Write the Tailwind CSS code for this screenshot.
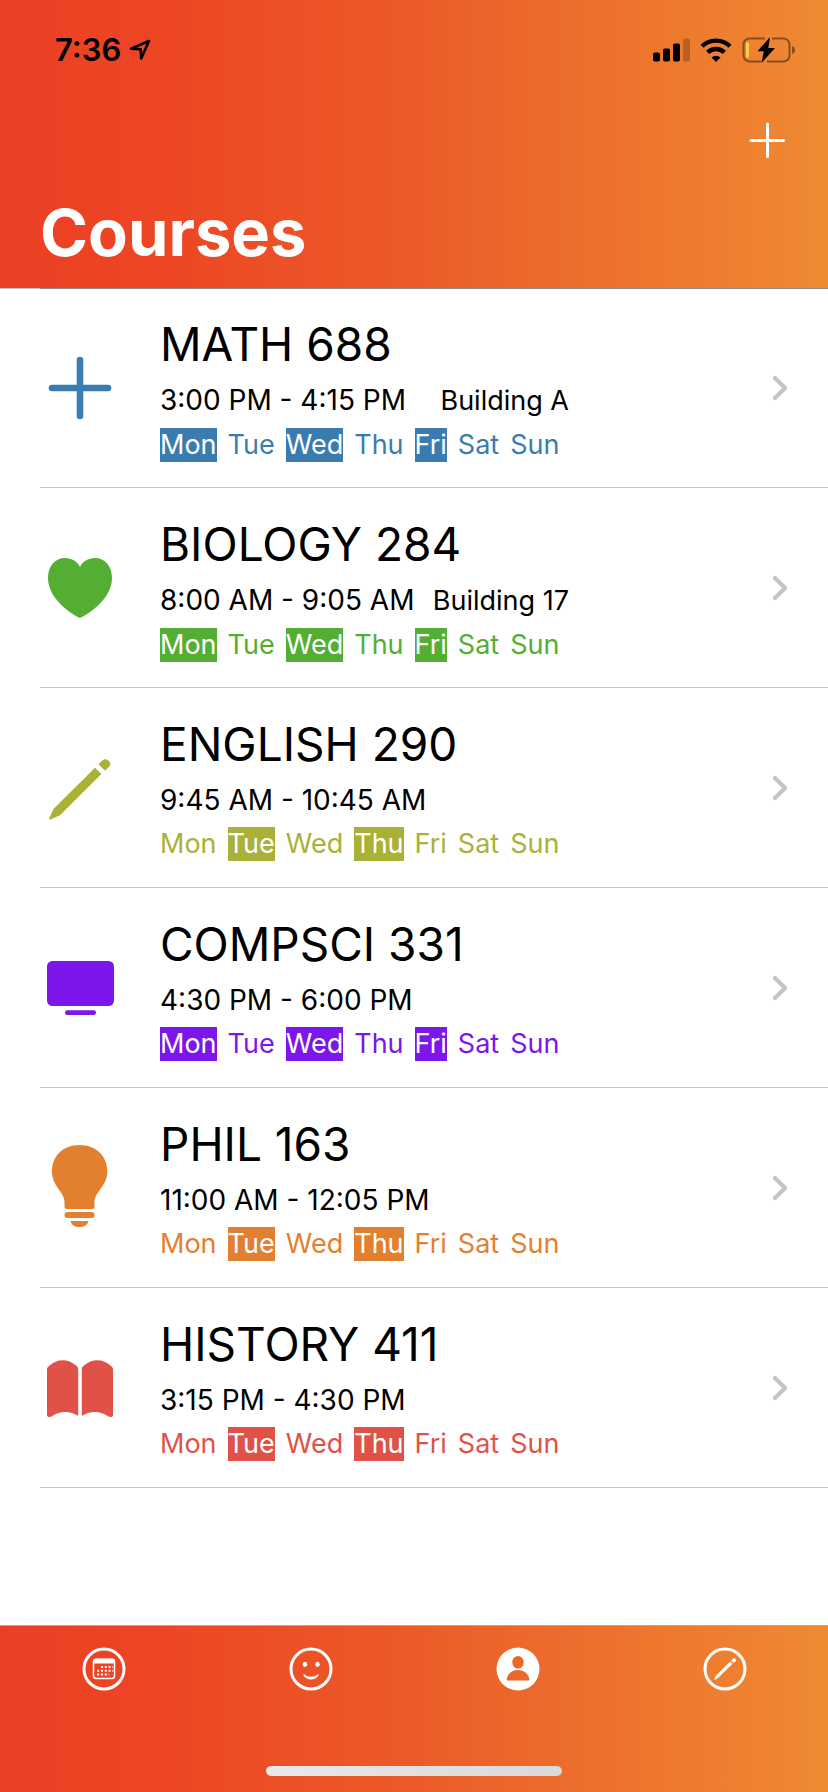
<!DOCTYPE html>
<html lang="en">
<head>
<meta charset="utf-8">
<meta name="viewport" content="width=device-width, initial-scale=1">
<title>Courses</title>
<script src="https://cdn.jsdelivr.net/npm/@tailwindcss/browser@4"></script>
</head>
<body class="flex min-h-screen flex-col bg-white font-['Inter',sans-serif] text-black">

<header class="bg-linear-[90deg,#ea3f25_0%,#ed4624_20%,#eb5b29_50%,#ed732d_75%,#ef8a33_100%]">
  <div class="flex h-[100px] items-center justify-between pr-[33px] pl-[55px]">
    <div class="flex items-center gap-2">
      <span class="text-[31px] leading-10 font-semibold">7:36</span>
      <svg class="h-[22px] w-[22px]" viewBox="0 0 22 22" fill="none" stroke="#000" stroke-width="2.6" stroke-linejoin="round" aria-hidden="true"><path d="M20 2 2 9.6l9.6.6.6 9.300z"/></svg>
    </div>
    <div class="flex items-center gap-[10px]">
      <svg class="h-6 w-[37px]" viewBox="0 0 37 24" aria-hidden="true"><rect x="0" y="14.500" width="7" height="9" rx="1.800"/><rect x="10" y="10.500" width="7" height="13" rx="1.800"/><rect x="20" y="5.500" width="7" height="18" rx="1.800"/><rect x="30" y=".5" width="7" height="23" rx="1.800" opacity=".22"/></svg>
      <svg class="h-6 w-8" viewBox="0 0 32 24" fill="none" stroke="#000" stroke-width="4.400" aria-hidden="true"><path d="M2 8.300a20 20 0 0 1 28 0"/><path d="M7.600 14.400a12 12 0 0 1 16.800 0"/><path d="M16 24l-4.500-4.500a6.500 6.500 0 0 1 9 0z" fill="#000" stroke="none"/></svg>
      <svg class="h-[26px] w-[53px]" viewBox="0 0 53 26" aria-hidden="true"><g fill="none" stroke="#000" stroke-opacity=".42" stroke-width="2"><path d="M23 1.500H7.500a6 6 0 0 0-6 6v11a6 6 0 0 0 6 6H19"/><path d="M30 1.500h11.500a6 6 0 0 1 6 6v11a6 6 0 0 1-6 6H25"/></g><path d="M50 9c4 1.200 4 6.800 0 8z" opacity=".42"/><path d="M4 5.500h3v15H4z" fill="#f8ce46"/><path d="M28 0 15.500 14.300h6.300L19.500 26 33 11h-6.700z"/></svg>
    </div>
  </div>
  <div class="flex h-20 items-center justify-end pr-[43px]">
    <button type="button" aria-label="Add course"><svg class="h-9 w-9" viewBox="0 0 36 36" stroke="#fff" stroke-width="3" stroke-linecap="round"><path d="M18.500 2v32.500M2 18.500h32.500"/></svg></button>
  </div>
  <h1 class="h-[108px] pt-[13px] pl-10 text-[65px] leading-[80px] font-bold text-white">Courses</h1>
  <div class="-mb-px flex h-px"><div class="w-10 bg-[#c4c4c4]"></div><div class="flex-1 bg-[#8e8e8e]"></div></div>
</header>

<main class="flex-1">
  <ul id="courses"></ul>
</main>

<footer class="border-t border-[#b3aaa6] bg-linear-[90deg,#ea3f25_0%,#ed4624_20%,#eb5b29_50%,#ed732d_75%,#ef8a33_100%] pt-[21px] pb-4">
  <nav class="grid grid-cols-4" aria-label="Sections">
    <a href="#calendar" aria-label="Calendar" class="flex justify-center"><svg class="h-11 w-11" viewBox="0 0 44 44" fill="none" stroke="#fff"><circle cx="22" cy="22" r="20" stroke-width="3"/><rect x="11.500" y="12.500" width="21" height="19" rx="2.500" stroke-width="1.500"/><path d="M11 16v-2a2.500 2.500 0 0 1 2.500-2.500h17A2.500 2.500 0 0 1 33 14v2.500H11z" fill="#fff" stroke="none"/><path d="M19 20h12M15.200 23.800h16M15.200 27.600h12" stroke-width="2" stroke-dasharray="2 1.800"/></svg></a>
    <a href="#mood" aria-label="Mood" class="flex justify-center"><svg class="h-11 w-11" viewBox="0 0 44 44" fill="#fff"><circle cx="22" cy="22" r="20" fill="none" stroke="#fff" stroke-width="3"/><ellipse cx="16" cy="17.300" rx="2.200" ry="2.600"/><ellipse cx="28.500" cy="17.300" rx="2.200" ry="2.600"/><path d="M15.500 27.500c3.500 3 9.500 3 13 0 .9-.4 1.300.2 1 1-3.400 5.300-11.600 5.300-15 0-.3-.8.2-1.400 1-1z"/></svg></a>
    <a href="#courses" aria-label="Courses" aria-current="page" class="flex justify-center"><svg class="h-11 w-11" viewBox="0 0 44 44" fill="#fff" fill-rule="evenodd"><path d="M22 .5a21.500 21.500 0 1 0 0 43 21.500 21.500 0 1 0 0-43zM22 9a5.700 6.300 0 1 1 0 12.600A5.700 6.300 0 1 1 22 9zM12 33.500c-1 0-1.400-.5-1.200-1.500 1-5.500 5-9 11.200-9s10.200 3.500 11.400 9c.2 1-.2 1.500-1.200 1.500z"/></svg></a>
    <a href="#notes" aria-label="Notes" class="flex justify-center"><svg class="h-11 w-11" viewBox="0 0 44 44" fill="#fff"><circle cx="22" cy="22" r="20" fill="none" stroke="#fff" stroke-width="3"/><path d="m27 14.700 2.400 2.400L14.800 31.300l-2.700 1.500c-.5.100-.8-.2-.7-.7l1.200-3z"/><circle cx="31" cy="13.200" r="1.900"/><circle cx="28.500" cy="14" r=".6"/><circle cx="30.200" cy="15.700" r=".6"/></svg></a>
  </nav>
  <div class="mx-auto mt-[75px] h-[10px] w-[296px] rounded-full bg-linear-to-r from-[#e9e9e9] to-[#d9d9d9]"></div>
</footer>

<script>
const icons = {
  plus: '<path d="M40 22v56M12 50h56" stroke="currentColor" stroke-width="6.600" stroke-linecap="round"/>',
  heart: '<path d="M40 80C36 78.500 8 63 8 40 8 28 15 20 25 20c7 0 12.500 3.500 15 9 2.500-5.500 8-9 15-9 10 0 17 8 17 20 0 23-28 38.500-32 40z"/>',
  pencil: '<path d="m55 29.700 6.300 6.300L20 77.300l-9.500 4.200c-1 .3-1.600-.3-1.300-1.300L13.500 71zM58.500 26.300l3.200-3.200c2.300-2.300 4.700-2.300 6.600-.5 2.600 2.400 2.600 4.400.3 6.700l-3.500 3.500z"/>',
  display: '<rect x="7" y="23" width="67" height="45" rx="5.500"/><rect x="25" y="72.300" width="31" height="4.700" rx="2.300"/>',
  bulb: '<path d="M39.500 7C23 7 12 18 12 33.500 12 48 24.500 54 24.500 64v4.500c0 1.700.8 2.500 2.500 2.500h25c1.700 0 2.500-.8 2.500-2.500V64c0-10 12.800-16 12.800-30.500C67.300 18 56 7 39.500 7z"/><rect x="24.500" y="74" width="30" height="6" rx="3"/><path d="M30.500 83h18c-1 4-4.500 6-9 6s-8-2-9-6z"/>',
  book: '<path d="M7 32c0-2 .3-2.700 2-4 8-7.500 19-7.500 27-.5 1.700 1.300 2.200 2 2.200 4V78c-8-5.500-18-5.500-26 0-2 1.800-5.200 1.300-5.200-1zM73 32c0-2-.3-2.700-2-4-8-7.500-19-7.500-27-.5-1.700 1.300-2.200 2-2.200 4V78c8-5.500 18-5.500 26 0 2 1.800 5.200 1.300 5.200-1z"/>'
};
const courses = [
  { name: 'MATH 688', time: '3:00 PM - 4:15 PM', place: 'Building A', days: 'Mon Wed Fri', icon: 'plus', fg: 'text-[#3a7caf]', bg: 'bg-[#3a7caf]' },
  { name: 'BIOLOGY 284', time: '8:00 AM - 9:05 AM', place: 'Building 17', days: 'Mon Wed Fri', icon: 'heart', fg: 'text-[#54ae33]', bg: 'bg-[#54ae33]' },
  { name: 'ENGLISH 290', time: '9:45 AM - 10:45 AM', place: '', days: 'Tue Thu', icon: 'pencil', fg: 'text-[#a9b136]', bg: 'bg-[#a9b136]' },
  { name: 'COMPSCI 331', time: '4:30 PM - 6:00 PM', place: '', days: 'Mon Wed Fri', icon: 'display', fg: 'text-[#7c16ea]', bg: 'bg-[#7c16ea]' },
  { name: 'PHIL 163', time: '11:00 AM - 12:05 PM', place: '', days: 'Tue Thu', icon: 'bulb', fg: 'text-[#e28030]', bg: 'bg-[#e28030]' },
  { name: 'HISTORY 411', time: '3:15 PM - 4:30 PM', place: '', days: 'Tue Thu', icon: 'book', fg: 'text-[#e05248]', bg: 'bg-[#e05248]' }
];
const week = ['Mon', 'Tue', 'Wed', 'Thu', 'Fri', 'Sat', 'Sun'];
document.getElementById('courses').innerHTML = courses.map(c => `
  <li class="ml-10 border-b border-[#c6c6c8]">
    <a href="#${c.icon}" class="flex h-[199px] items-center gap-10 pr-[39px]">
      <svg class="h-[100px] w-20 shrink-0 ${c.fg}" viewBox="0 0 80 100" fill="currentColor" aria-hidden="true">${icons[c.icon]}</svg>
      <div class="w-[409px] whitespace-nowrap">
        <h2 class="text-[46px] leading-[60px]">${c.name}</h2>
        <p class="mt-[9px] flex items-baseline justify-between leading-[34px]"><span class="text-[28px]">${c.time}</span><span class="text-[27px]">${c.place}</span></p>
        <p class="mt-[10px] flex gap-[11px] text-[27px] leading-[34px]">${week.map(d =>
          `<span class="${c.days.includes(d) ? c.bg + ' text-white' : c.fg}">${d}</span>`).join('')}</p>
      </div>
      <svg class="ml-auto h-7 w-5 shrink-0" viewBox="0 0 20 28" fill="none" stroke="#c5c5c7" stroke-width="4.400" stroke-linecap="round" stroke-linejoin="round" aria-hidden="true"><path d="m6 4 10 10L6 24"/></svg>
    </a>
  </li>`).join('');
</script>
</body>
</html>
